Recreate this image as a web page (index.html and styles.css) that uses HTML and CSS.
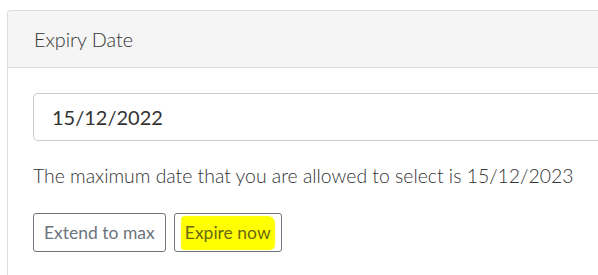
FILE: index.html
```html
<!DOCTYPE html>
<html>
<head>
<meta charset="utf-8">
<link rel="stylesheet" href="styles.css">
</head>
<body>
<div class="card">
  <div class="card-header">Expiry Date</div>
  <div class="card-body">
    <div class="date-input">15/12/2022</div>
    <p class="hint">The maximum date that you are allowed to select is 15/12/2023</p>
    <div class="actions">
      <button class="btn">Extend to max</button>
      <button class="btn"><span class="mark">Expire now</span></button>
    </div>
  </div>
</div>
</body>
</html>
```
FILE: styles.css
```css
html, body {
  margin: 0;
  padding: 0;
  background: #fff;
  overflow: hidden;
  height: 100%;
}
body {
  font-family: Lato, "Open Sans", sans-serif;
  font-weight: 300;
  color: #333;
}
.card {
  box-sizing: border-box;
  margin: 10px 0 0 7px;
  height: calc(100% - 10px);
  border: 1px solid #dcdcdc;
  border-right: none;
  border-bottom: none;
  border-radius: 4px 0 0 0;
}
.card-header {
  height: 56px;
  background: #f5f5f5;
  border-bottom: 1px solid #dcdcdc;
  border-radius: 4px 0 0 0;
  display: flex;
  align-items: center;
  padding-left: 26px;
  font-size: 19.8px;
  color: #333;
}
.card-body {
  padding: 25px 0 0 25px;
}
.date-input {
  box-sizing: border-box;
  height: 48px;
  border: 1px solid #ccc;
  border-right: none;
  border-radius: 5px 0 0 5px;
  display: flex;
  align-items: center;
  padding-left: 18px;
  font-size: 20px;
  font-weight: 400;
  color: #333;
}
.hint {
  margin: 22px 0 0 0;
  font-size: 19.4px;
  line-height: 26px;
  color: #333;
}
.actions {
  display: flex;
  gap: 8px;
  margin-top: 24px;
}
.btn {
  font-family: Lato, "Open Sans", sans-serif;
  font-weight: 400;
  font-size: 17.5px;
  color: #6c757d;
  background: #fff;
  border: 1px solid #6c757d;
  border-radius: 3px;
  height: 39px;
  padding: 0 10px;
}
.mark {
  display: inline-block;
  background: #ffff00;
  color: #6a6a10;
  padding: 5px 3px 6px;
  margin: 0 -3px;
  border-radius: 3px 6px 4px 2px;
  box-shadow: 0 0 1px 1px #ffff00;
}
```
